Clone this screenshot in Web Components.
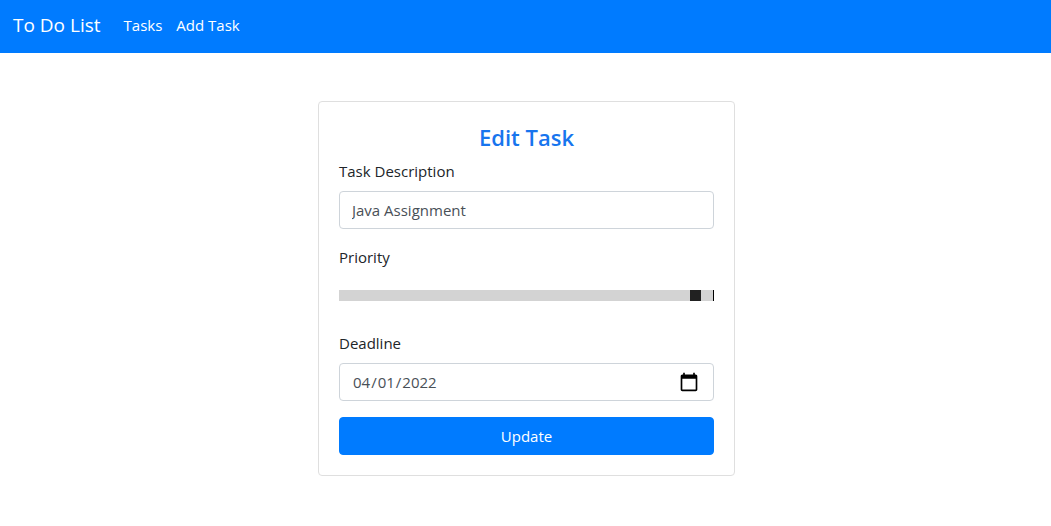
<!DOCTYPE html>
<html lang="en">
<head>
<meta charset="utf-8">
<meta name="viewport" content="width=device-width, initial-scale=1">
<title>To Do List</title>
<style>
  body {
    margin: 0;
    background: #fff;
    color: #212529;
    font: 15px/24px "Segoe UI", "Open Sans", "Noto Sans", sans-serif;
  }
</style>
</head>
<body>
<todo-navbar>
  <span slot="brand">To Do List</span>
  <todo-nav-link href="#tasks">Tasks</todo-nav-link>
  <todo-nav-link href="#add">Add Task</todo-nav-link>
</todo-navbar>
<todo-card>
  <span slot="title">Edit Task</span>
  <edit-task-form></edit-task-form>
</todo-card>

<script>
class TodoElement extends HTMLElement {
  constructor() {
    super();
    this.attachShadow({ mode: "open" }).innerHTML =
      "<style>*, *::before, *::after { box-sizing: border-box; }</style>" + this.constructor.markup;
  }
}

customElements.define("todo-navbar", class extends TodoElement {
  static markup = `
    <style>
      :host { display: block; background: #007bff; color: #fff; }
      nav { display: flex; flex-wrap: wrap; align-items: center; padding: 5px 13px 8px; }
      .brand { margin-right: 16px; color: inherit; font-size: 19px; line-height: 30px; text-decoration: none; white-space: nowrap; }
      .links { display: flex; }
    </style>
    <nav aria-label="Main">
      <a class="brand" href="#"><slot name="brand"></slot></a>
      <div class="links"><slot></slot></div>
    </nav>`;
});

customElements.define("todo-nav-link", class extends TodoElement {
  static markup = `
    <style>
      :host { display: block; }
      a { display: block; padding: 8px 7px; color: inherit; text-decoration: none; white-space: nowrap; }
    </style>
    <a><slot></slot></a>`;
  connectedCallback() {
    this.shadowRoot.querySelector("a").href = this.getAttribute("href");
  }
});

customElements.define("todo-card", class extends TodoElement {
  static markup = `
    <style>
      :host { display: block; padding: 48px 14px 48px 16px; }
      section { max-width: 417px; margin: 0 auto; padding: 20px; border: 1px solid #dfdfdf; border-radius: 4px; background: #fff; }
      h1 { margin: 0 0 6px; color: #1775ee; font-size: 22px; font-weight: 600; line-height: 31px; text-align: center; }
    </style>
    <section>
      <h1><slot name="title"></slot></h1>
      <slot></slot>
    </section>`;
});

customElements.define("edit-task-form", class extends TodoElement {
  static markup = `
    <style>
      :host { display: block; }
      form { display: grid; gap: 16px; margin: 0; }
      .field { display: grid; gap: 8px; }
      input, button { width: 100%; height: 38px; margin: 0; border-radius: 4px; font: inherit; }
      input { border: 1px solid #ced4da; padding: 6px 12px; background: #fff; color: #495057; }
      .slider { display: flex; align-items: center; height: 38px; padding-bottom: 1px; }
      input[type=range] {
        -webkit-appearance: none; appearance: none;
        height: 11px; padding: 0; border: 0; border-right: 1px solid #000; border-radius: 0; background: #d3d3d3;
      }
      input[type=range]::-webkit-slider-thumb {
        -webkit-appearance: none; appearance: none;
        width: 11px; height: 11px; border: 0; border-radius: 0; background: #212121;
      }
      input[type=range]::-moz-range-thumb { width: 11px; height: 11px; border: 0; border-radius: 0; background: #212121; }
      input[type=date]::-webkit-calendar-picker-indicator { width: 20px; height: 20px; background-size: 20px 20px; }
      button { border: 1px solid #007bff; padding: 6px 12px; background: #007bff; color: #fff; cursor: pointer; }
    </style>
    <form>
      <div class="field">
        <label for="description">Task Description</label>
        <input id="description" type="text" value="Java Assignment">
      </div>
      <div class="field">
        <label for="priority">Priority</label>
        <div class="slider"><input id="priority" type="range" min="0" max="30" value="29"></div>
      </div>
      <div class="field">
        <label for="deadline">Deadline</label>
        <input id="deadline" type="date" value="2022-04-01">
      </div>
      <button type="submit">Update</button>
    </form>`;
});
</script>
</body>
</html>
